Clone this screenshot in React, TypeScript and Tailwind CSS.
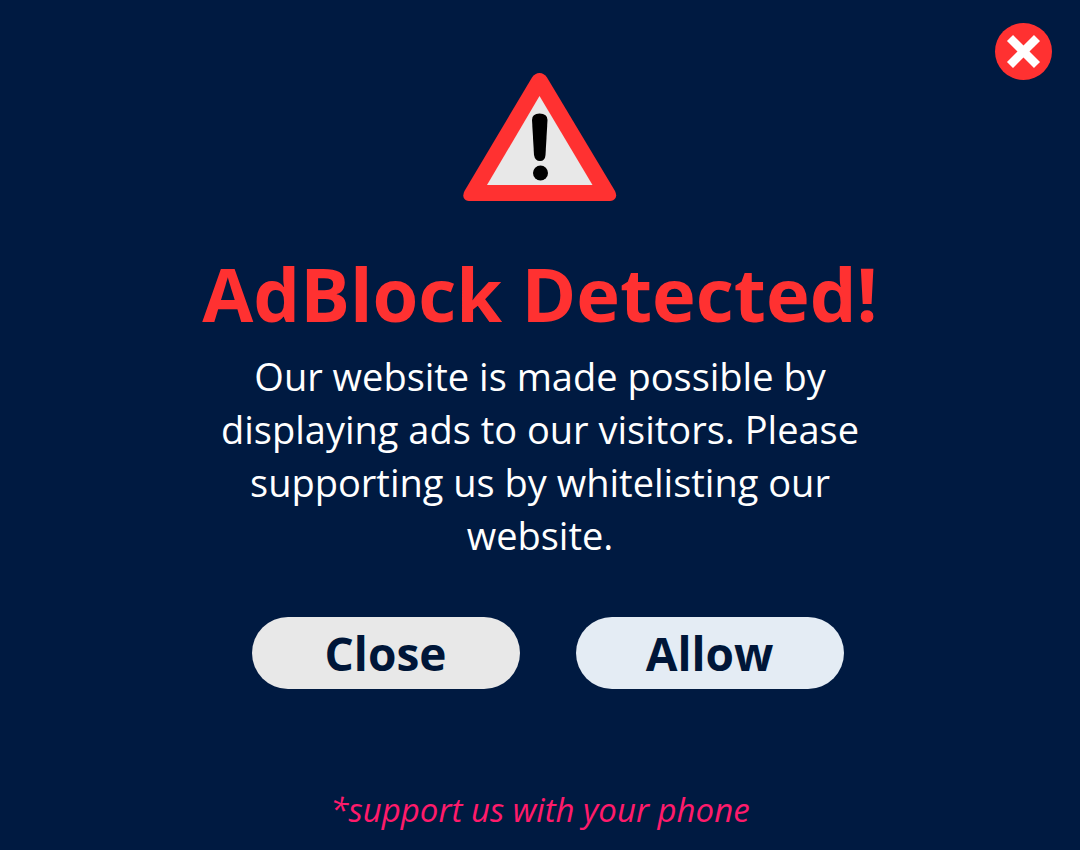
import React from 'react';

function WarningSign() {
  return (
    <svg viewBox="0 0 154 130" className="w-[154px] h-[130px]" role="img" aria-label="Warning">
      <path
        d="M69 5.5 Q72 1 76.5 1 Q81 1 84 5.5 L152 119 Q154 123 152.500 126 Q150.500 129 147 129 H6 Q2.500 129 0.800 126 Q-0.500 123 1.500 119 Z"
        fill="#ff3131"
      />
      <path d="M76.5 24 L129.5 113 H24 Z" fill="#e8e8e8" />
      <path d="M69 48 Q69 41.500 76.500 41.500 Q84.500 41.500 84.500 48 L82.500 83 Q82 89 77 89 Q72 89 71 83 Z" fill="#000" />
      <circle cx="77.5" cy="101" r="7.5" fill="#000" />
    </svg>
  );
}

function CrossIcon() {
  return (
    <svg viewBox="0 0 57 57" className="w-[57px] h-[57px]" aria-hidden="true">
      <path d="M15 15 L42 42 M42 15 L15 42" stroke="#fff" strokeWidth="8.5" />
    </svg>
  );
}

export default function App() {
  return (
    <div className="min-h-screen bg-[#001a41] flex flex-col font-['Open_Sans',sans-serif]">
      <header className="flex justify-end pt-[23px] pr-7">
        <button type="button" aria-label="Dismiss" className="rounded-full bg-[#ff3131]">
          <CrossIcon />
        </button>
      </header>

      <main className="flex flex-col items-center text-center">
        <div className="-mt-2">
          <WarningSign />
        </div>
        <h1 className="mt-10 text-[74px] leading-[104px] font-bold text-[#ff3131]">AdBlock Detected!</h1>
        <p className="mt-1 max-w-[660px] text-[38px] leading-[53px] text-white">
          Our website is made possible by displaying ads to our visitors. Please supporting us by whitelisting our
          website.
        </p>
        <div className="mt-[55px] ml-[15px] flex gap-14 text-[46px] leading-[72px] font-bold text-[#001638]">
          <button type="button" className="w-[268px] rounded-full bg-[#e8e8e8]">
            Close
          </button>
          <button type="button" className="w-[268px] rounded-full bg-[#e4ecf4]">
            Allow
          </button>
        </div>
      </main>

      <footer className="mt-auto pb-4 text-center text-[33px] leading-12 italic text-[#ff1b6b]">
        *support us with your phone
      </footer>
    </div>
  );
}
